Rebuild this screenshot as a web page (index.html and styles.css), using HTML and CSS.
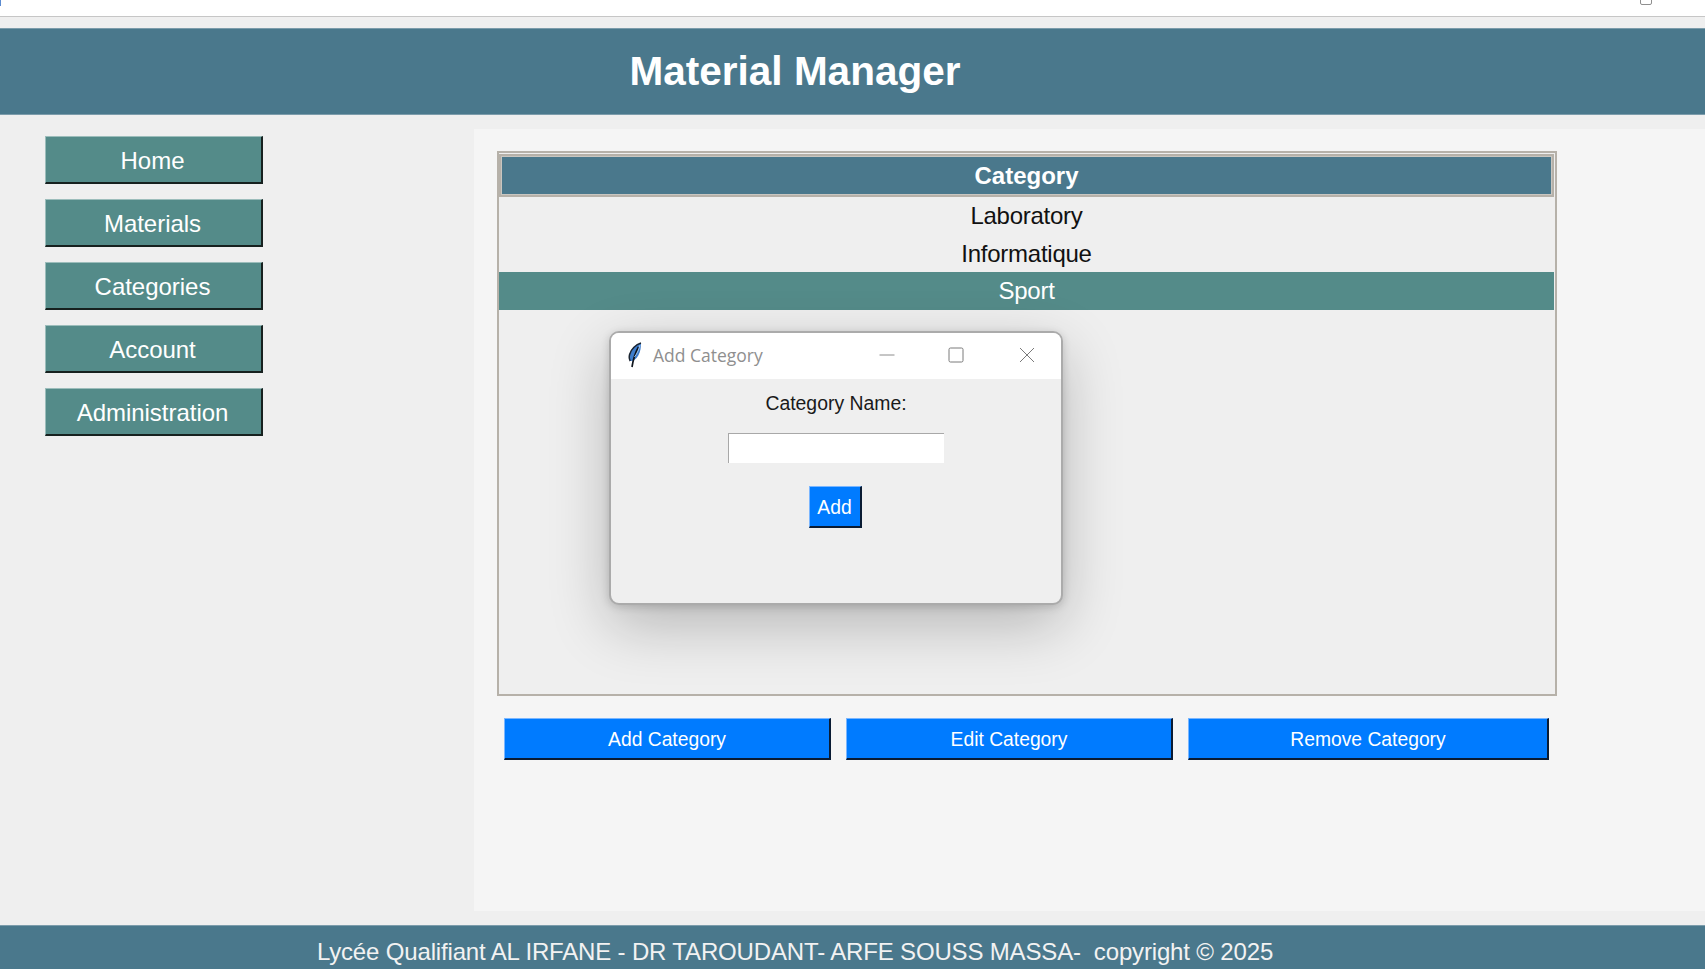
FILE: index.html
```html
<!DOCTYPE html>
<html lang="en">
<head>
    <meta charset="UTF-8">
    <meta name="viewport" content="width=device-width, initial-scale=1.0">
    <title>Material Manager</title>
    <link rel="stylesheet" href="styles.css">
</head>
<body>
    <div class="browser-bar">
        <span class="browser-tick"></span>
        <span class="browser-icon"></span>
    </div>

    <header class="app-header">
        <h1>Material Manager</h1>
    </header>

    <div class="app-main">
        <nav class="sidebar">
            <button class="nav-btn">Home</button>
            <button class="nav-btn">Materials</button>
            <button class="nav-btn">Categories</button>
            <button class="nav-btn">Account</button>
            <button class="nav-btn">Administration</button>
        </nav>

        <main class="content">
            <div class="tree">
                <div class="tree-heading"><span>Category</span></div>
                <div class="tree-row">Laboratory</div>
                <div class="tree-row">Informatique</div>
                <div class="tree-row selected">Sport</div>
            </div>

            <div class="actions">
                <button class="action-btn add">Add Category</button>
                <button class="action-btn edit">Edit Category</button>
                <button class="action-btn remove">Remove Category</button>
            </div>
        </main>
    </div>

    <footer class="app-footer">Lycée Qualifiant AL IRFANE - DR TAROUDANT- ARFE SOUSS MASSA-&nbsp; copyright © 2025</footer>

    <!-- Add Category window -->
    <div class="dialog">
        <div class="dialog-title">
            <svg class="feather" width="14" height="26" viewBox="0 0 14 26">
                <path d="M13 1C8 2.500 3 7 1.600 12.500c-.7 2.800-.3 5 .6 6.500 1.200.2 2.800-.2 4.300-1.200 3-2 5.200-6 6-10.500.3-2.200.5-4.500.5-6.300z" fill="#3d7ccc"/>
                <path d="M13 1C8 2.500 3 7 1.600 12.500c-.7 2.800-.3 5 .6 6.500" fill="none" stroke="#1a2430" stroke-width="1.500"/>
                <path d="M10.500 5C8 9.500 5.500 15 4 25" fill="none" stroke="#0f151d" stroke-width="1.700"/>
                <path d="M12 3c-1 4-2.500 8-5.500 12" fill="none" stroke="#9cc3ee" stroke-width="1"/>
            </svg>
            <span class="dialog-name">Add Category</span>
            <div class="win-controls">
                <svg class="win-min" width="16" height="16" viewBox="0 0 16 16"><path d="M0.500 8H15.500" stroke="#8c8c8c" fill="none"/></svg>
                <svg width="16" height="16" viewBox="0 0 16 16"><rect x="1" y="1" width="14" height="14" rx="1.500" stroke="#7a7a7a" fill="none"/></svg>
                <svg width="16" height="16" viewBox="0 0 16 16"><path d="M1 1L15 15M15 1L1 15" stroke="#7a7a7a" fill="none"/></svg>
            </div>
        </div>
        <div class="dialog-body">
            <label class="dialog-label" for="categoryName">Category Name:</label>
            <input class="dialog-input" id="categoryName" type="text">
            <button class="action-btn dialog-add">Add</button>
        </div>
    </div>
</body>
</html>
```

FILE: styles.css
```css
* {
    box-sizing: border-box;
}

html, body {
    height: 100%;
}

body {
    margin: 0;
    display: flex;
    flex-direction: column;
    height: 969px;
    overflow: hidden;
    background-color: #efefef;
    font-family: "Liberation Sans", Arial, sans-serif;
    color: #111;
}

.browser-bar {
    position: relative;
    flex: none;
    height: 17px;
    margin-bottom: 11px;
    background-color: #fff;
    border-bottom: 1px solid #c6c6c6;
}

.browser-tick {
    position: absolute;
    left: 0;
    top: 0;
    width: 1px;
    height: 6px;
    background-color: #5b8bd0;
}

.browser-icon {
    position: absolute;
    left: 1640px;
    top: -7px;
    width: 12px;
    height: 12px;
    border: 1.500px solid #8f8f8f;
    border-radius: 2px;
}

.app-header {
    flex: none;
    height: 87px;
    padding-right: 115px;
    display: flex;
    align-items: center;
    justify-content: center;
    background-color: #4a788c;
    border-top: 1px solid #7c9cab;
    border-bottom: 1px solid #7c9cab;
}

.app-header h1 {
    margin: 0;
    font-size: 40.500px;
    font-weight: bold;
    color: #fff;
}

.app-main {
    flex: 1;
    display: flex;
    min-height: 0;
}

.sidebar {
    flex: none;
    width: 474px;
    padding: 21px 0 0 45px;
    display: flex;
    flex-direction: column;
    gap: 15px;
}

button {
    font-family: inherit;
    color: #fff;
    border-style: solid;
    padding: 2px 0 0;
}

.nav-btn {
    width: 218px;
    height: 48px;
    padding-right: 2px;
    font-size: 24px;
    letter-spacing: -0.030px;
    background-color: #548b89;
    border-width: 1px 2px 2px 1px;
    border-color: #9cbdbb #17211f #17211f #9cbdbb;
}

.content {
    flex: 1;
    margin: 14px 0;
    padding: 22px 0 0 23px;
    background-color: #f5f5f5;
}

.tree {
    width: 1060px;
    height: 545px;
    padding: 1px 1px 1px 0;
    background-color: #efefef;
    border: 2px solid #b6b1a9;
}

.tree-heading {
    height: 43px;
    border: 2px solid #b6b1a9;
    background-color: #c9c6c0;
    padding: 1px;
}

.tree-heading span {
    display: flex;
    height: 100%;
    align-items: center;
    justify-content: center;
    font-size: 24px;
    font-weight: bold;
    color: #fff;
    background-color: #4a788c;
}

.tree-row {
    height: 37.500px;
    line-height: 37.500px;
    text-align: center;
    font-size: 24px;
    letter-spacing: -0.250px;
    color: #111;
}

.tree-row.selected {
    color: #fff;
    background-color: #548b89;
}

.actions {
    margin: 22px 0 0 7px;
    display: flex;
    gap: 15px;
}

.action-btn {
    height: 42px;
    padding-top: 3px;
    font-size: 19.300px;
    background-color: #007bff;
    border-width: 1px 2px 2px 1px;
    border-color: #7ab6ff #0a1b33 #0a1b33 #7ab6ff;
}

.action-btn.add,
.action-btn.edit {
    width: 327px;
}

.action-btn.remove {
    width: 361px;
}

.dialog {
    position: absolute;
    left: 609px;
    top: 331px;
    width: 454px;
    height: 274px;
    display: flex;
    flex-direction: column;
    overflow: hidden;
    border: 2px solid #ababab;
    border-radius: 10px;
    background-color: #efefef;
    box-shadow: 0 20px 60px rgba(0, 0, 0, 0.24), 0 2px 8px rgba(0, 0, 0, 0.16);
}

.dialog-title {
    flex: none;
    height: 46px;
    padding: 0 26px 2px 17px;
    display: flex;
    align-items: center;
    background-color: #fff;
}

.feather {
    flex: none;
}

.dialog-name {
    flex: 1;
    margin-left: 11px;
    font-family: "Open Sans", sans-serif;
    font-size: 17.500px;
    color: #8f8f8f;
}

.win-controls {
    display: flex;
    gap: 55px;
}

.win-min {
    margin-right: -2px;
}

.dialog-body {
    flex: 1;
    display: flex;
    flex-direction: column;
    align-items: center;
    padding-top: 11px;
}

.dialog-label {
    font-size: 19.400px;
    line-height: 26px;
    color: #1a1a1a;
}

.dialog-input {
    width: 216px;
    height: 30px;
    margin-top: 17px;
    background-color: #fff;
    border-style: solid;
    border-width: 1px 0 0 1px;
    border-color: #a8a8a8;
    outline: none;
}

.dialog-add {
    width: 53px;
    margin: 23px 2px 0 0;
    padding-top: 2px;
}

.app-footer {
    flex: none;
    height: 44px;
    padding: 8px 115px 0 0;
    display: flex;
    align-items: center;
    justify-content: center;
    font-size: 24px;
    letter-spacing: -0.160px;
    color: #f2f2f2;
    background-color: #4a788c;
    border-top: 1px solid #7c9cab;
}
```
